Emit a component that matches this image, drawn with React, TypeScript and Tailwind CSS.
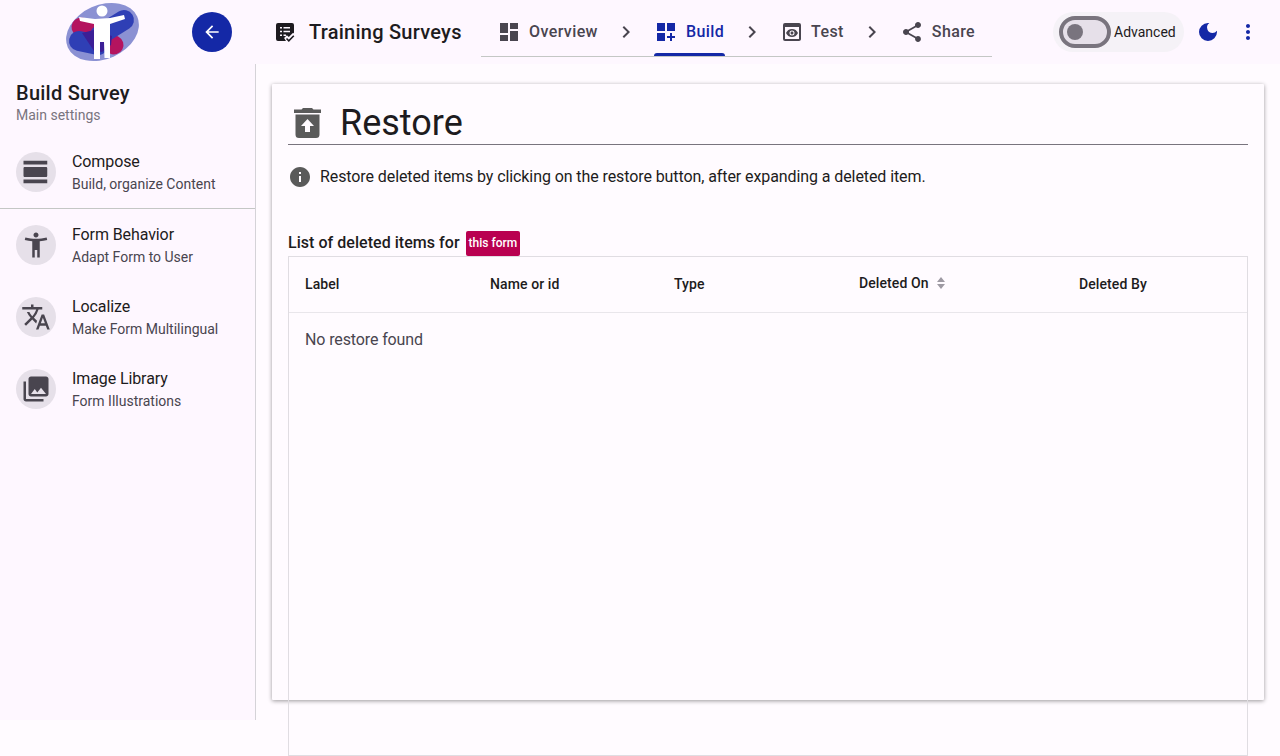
import React from 'react'
import {
  MdAccessibilityNew,
  MdArrowBack,
  MdChevronRight,
  MdDarkMode,
  MdDashboard,
  MdDashboardCustomize,
  MdInfo,
  MdMoreVert,
  MdPhotoLibrary,
  MdPreview,
  MdShare,
  MdTranslate,
  MdViewDay,
} from 'react-icons/md'

function Logo() {
  return (
    <svg width="76" height="62" viewBox="0 0 76 62">
      <ellipse cx="38.5" cy="31" rx="38" ry="27" transform="rotate(-24 38.5 31)" fill="#8b91d3" />
      <line x1="17" y1="26" x2="50" y2="44" stroke="#b4145f" strokeWidth="19" strokeLinecap="round" />
      <line x1="15" y1="40" x2="34" y2="44" stroke="#2f3fb5" strokeWidth="20" strokeLinecap="round" />
      <line x1="60" y1="19" x2="36" y2="34" stroke="#2f3fb5" strokeWidth="20" strokeLinecap="round" />
      <path d="M18 32 L30 29 L48 35 L47 44 L38 51 L30 50 L24 41Z" fill="#3c1f96" />
      <circle cx="38" cy="10" r="5.500" fill="#fff" />
      <path
        d="M15 16 L31 18 L46 17 L60 14 L61 18 L46 23 L46 57 L40.500 57 L40 41 L36 41 L36 58 L30 58 L30 23 L16 20Z"
        fill="#fff"
      />
    </svg>
  )
}

function SurveyIcon() {
  return (
    <svg width="24" height="24" viewBox="0 0 24 24" className="text-[#1d1b20]">
      <path
        fill="currentColor"
        d="M5 3h14a2 2 0 0 1 2 2v8.600l-.9-.9-4.300 4.400-1.900-1.900-2.800 2.800L13 21H5a2 2 0 0 1-2-2V5a2 2 0 0 1 2-2z"
      />
      <path fill="#fef7ff" d="M7 7h2v1.600H7zM10.500 7H17v1.600h-6.500zM7 10.700h2v1.600H7zM10.500 10.700H17v1.600h-6.500zM7 14.400h2V16H7zM10.500 14.400H13V16h-2.500z" />
      <path fill="none" stroke="currentColor" strokeWidth="1.600" d="M13.500 18.500l2.300 2.300 5-5" />
    </svg>
  )
}

function TrashIcon() {
  return (
    <svg width="27" height="30" viewBox="0 0 27 30" className="shrink-0">
      <path fill="#5a5a5a" d="M9 0h9l1.500 1.500H27V5H0V1.500h7.500z" />
      <path fill="#5a5a5a" d="M1.500 6.500h24V26.500a3.500 3.500 0 0 1-3.500 3.500H5a3.500 3.500 0 0 1-3.500-3.500z" />
      <path fill="#fffbff" d="M13.500 11l6.500 7h-4v6h-5v-6H7z" />
    </svg>
  )
}

const navItems = [
  { title: 'Compose', sub: 'Build, organize Content', Icon: MdViewDay, row: 'h-[70px] pt-[13px] border-b border-[#c4c7c5]' },
  { title: 'Form Behavior', sub: 'Adapt Form to User', Icon: MdAccessibilityNew, row: 'h-[72px] pt-4' },
  { title: 'Localize', sub: 'Make Form Multilingual', Icon: MdTranslate, row: 'h-[72px] pt-4' },
  { title: 'Image Library', sub: 'Form Illustrations', Icon: MdPhotoLibrary, row: 'h-[72px] pt-4' },
]

const columns = [
  { label: 'Label', w: 'w-[185px]' },
  { label: 'Name or id', w: 'w-[184px]' },
  { label: 'Type', w: 'w-[185px]' },
]

function App() {
  return (
    <div className="h-[756px] overflow-hidden bg-[#fffbff] font-['Roboto',sans-serif] text-[#1d1b20]">
      {/* top bar */}
      <header className="flex h-16 items-center bg-[#fef7ff]">
        <div className="flex w-[192px] justify-end pr-[52px]">
          <Logo />
        </div>
        <button className="flex h-10 w-10 items-center justify-center rounded-full bg-[#1428a6] text-white">
          <MdArrowBack size={20} />
        </button>
        <div className="ml-[41px] flex w-[208px] items-center gap-3">
          <SurveyIcon />
          <span className="text-xl font-medium tracking-[0.25px] whitespace-nowrap">Training Surveys</span>
        </div>
        <nav className="relative flex h-16 w-[511px] items-center text-base font-medium tracking-[0.4px] text-[#49454f]">
          <div className="absolute bottom-[7px] left-0 right-0 h-px bg-[#c4c7c5]" />
          <div className="ml-4 flex items-center gap-2">
            <MdDashboard size={24} />
            <span>Overview</span>
          </div>
          <MdChevronRight size={24} className="ml-4" />
          <div className="relative ml-4 flex items-center gap-2 text-[#1428a6]">
            <MdDashboardCustomize size={24} />
            <span>Build</span>
            <div className="absolute -bottom-3 left-0 -right-px h-[3px] rounded-t-[3px] bg-[#1428a6]" />
          </div>
          <MdChevronRight size={24} className="ml-4" />
          <div className="ml-4 flex items-center gap-[7px]">
            <MdPreview size={24} />
            <span>Test</span>
          </div>
          <MdChevronRight size={24} className="ml-4" />
          <div className="ml-4 flex items-center gap-2">
            <MdShare size={24} />
            <span>Share</span>
          </div>
        </nav>
        <div className="ml-[61px] flex h-10 w-[131px] items-center rounded-full bg-[#f5f2f7] pl-[6px]">
          <div className="flex h-8 w-[52px] items-center rounded-full border-[4px] border-[#79747e] bg-[#e6e0e9] pl-[4px]">
            <div className="h-4 w-4 rounded-full bg-[#79747e]" />
          </div>
          <span className="ml-[3px] text-sm">Advanced</span>
        </div>
        <MdDarkMode size={24} className="ml-3 text-[#1428a6]" />
        <MdMoreVert size={24} className="ml-4 text-[#1428a6]" />
      </header>

      <div className="flex">
        {/* sidebar */}
        <aside className="h-[656px] w-[256px] shrink-0 border-r border-[#d5d3d8] bg-[#fef7ff]">
          <div className="h-[75px] px-4 pt-[15px]">
            <div className="text-xl leading-7 font-medium tracking-[0.25px]">Build Survey</div>
            <div className="text-sm leading-4 text-[#79747e]">Main settings</div>
          </div>
          {navItems.map(({ title, sub, Icon, row }) => (
            <div key={title} className={`flex items-start gap-4 px-4 ${row}`}>
              <div className="flex h-10 w-10 shrink-0 items-center justify-center rounded-full bg-[#e6e0e9] text-[#49454f]">
                <Icon size={30} />
              </div>
              <div className="-mt-[2px]">
                <div className="text-base leading-6 tracking-[-0.1px]">{title}</div>
                <div className="text-sm leading-[21px] text-[#49454f]">{sub}</div>
              </div>
            </div>
          ))}
        </aside>

        {/* content */}
        <main className="min-w-0 flex-1 px-4 pt-5">
          <div className="h-[616px] rounded-[1px] bg-[#fffbff] px-4 shadow-[0_1px_4px_rgba(0,0,0,0.4)]">
            <div className="flex h-[61px] items-center gap-[19px] border-b border-[#79747e] pl-[6px] pt-[17px]">
              <TrashIcon />
              <h1 className="text-[36px] leading-[44px]">Restore</h1>
            </div>
            <div className="mt-5 flex items-center gap-2">
              <MdInfo size={24} className="text-[#5a5a5a]" />
              <p className="text-base tracking-[-0.09px]">
                Restore deleted items by clicking on the restore button, after expanding a deleted item.
              </p>
            </div>
            <div className="mt-[42px] flex h-[25px] items-center">
              <span className="-translate-y-px text-base font-medium tracking-[0.04px]">List of deleted items for</span>
              <span className="ml-[6px] rounded-[2px] bg-[#b90050] px-[3px] text-xs leading-[25px] font-medium text-white">
                this form
              </span>
            </div>
            <div className="h-[500px] border border-[#e0dde2]">
              <div className="flex h-[56px] items-center border-b border-[#e9e6eb] pb-[2px] pl-4 text-sm font-medium tracking-[0.1px]">
                {columns.map((c) => (
                  <div key={c.label} className={c.w}>
                    {c.label}
                  </div>
                ))}
                <div className="flex w-[220px] items-center gap-2">
                  <span className="-translate-y-px">Deleted On</span>
                  <svg width="8" height="12" viewBox="0 0 8 12" className="-translate-y-px text-[#9e9aa3]">
                    <path fill="currentColor" d="M4 0l4 5H0zM0 7h8l-4 5z" />
                  </svg>
                </div>
                <div>Deleted By</div>
              </div>
              <div className="pl-4 pt-[15px] text-base leading-6 tracking-[-0.12px] text-[#49454f]">No restore found</div>
            </div>
          </div>
        </main>
      </div>
    </div>
  )
}

export default App
